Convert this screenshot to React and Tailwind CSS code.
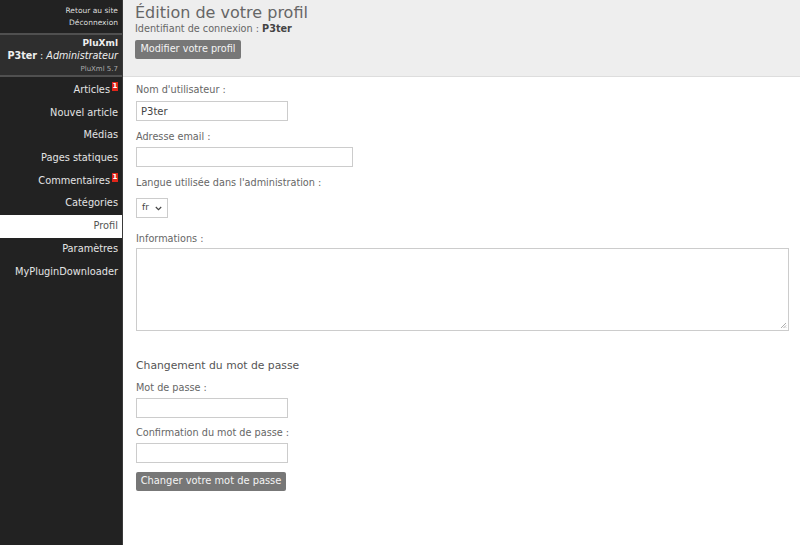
import React from "react";

const menu = [
  { label: "Articles", badge: true },
  { label: "Nouvel article" },
  { label: "Médias" },
  { label: "Pages statiques" },
  { label: "Commentaires", badge: true },
  { label: "Catégories" },
  { label: "Profil", active: true },
  { label: "Paramètres" },
  { label: "MyPluginDownloader" },
];

function Badge() {
  return (
    <span className="relative top-[-4px] ml-[2px] inline-flex h-[9px] w-[6px] items-center justify-center bg-[#e0261a] text-[7px] leading-none font-bold text-white">
      1
    </span>
  );
}

export default function App() {
  return (
    <div
      className="flex h-[545px] w-[800px] overflow-hidden bg-white text-[#555]"
      style={{ fontFamily: '"DejaVu Sans", sans-serif' }}
    >
      <aside className="flex w-[123px] shrink-0 flex-col border-r border-[#3a3a3a] bg-[#222]">
        <div className="flex h-[33px] flex-col items-end justify-center gap-[3px] pr-[4px] text-[7.5px] leading-[9px] text-[#ddd]">
          <span>Retour au site</span>
          <span>Déconnexion</span>
        </div>
        <div className="flex h-[44px] flex-col items-end justify-center border-y-2 border-[#505050] bg-[#2e2e2e] pr-[4px] text-right whitespace-nowrap">
          <span className="text-[9px] leading-[11px] font-bold text-[#eee]">PluXml</span>
          <span className="text-[9.6px] leading-[13px] text-[#eee]">
            <b>P3ter</b> : <i>Administrateur</i>
          </span>
          <span className="mt-[3px] text-[7px] leading-[8px] text-[#aaa]">PluXml 5.7</span>
        </div>
        <nav className="mt-[2px] flex flex-col">
          {menu.map((m) => (
            <div
              key={m.label}
              className={
                "flex h-[22.7px] items-center justify-end pr-[4px] text-[9.8px] " +
                (m.active ? "bg-white text-[#555]" : "text-[#e4e4e4]")
              }
            >
              {m.label}
              {m.badge && <Badge />}
            </div>
          ))}
        </nav>
      </aside>
      <main className="flex flex-1 flex-col">
        <header className="flex h-[77px] flex-col border-b border-[#ddd] bg-[#eee] pl-[12px] pt-[3px]">
          <h1 className="text-[16px] leading-[20px] text-[#666]">Édition de votre profil</h1>
          <p className="text-[9.7px] leading-[12px] text-[#666]">
            Identifiant de connexion : <b className="text-[#444]">P3ter</b>
          </p>
          <button className="mt-[5px] h-[19px] w-[106px] rounded-[2px] bg-[#777] text-[9.7px] whitespace-nowrap text-[#f4f4f4]">
            Modifier votre profil
          </button>
        </header>
        <div className="flex flex-col pl-[13px] pt-[7px] text-[9.7px] text-[#666]">
          <label className="leading-[12px]">Nom d'utilisateur :</label>
          <div className="mt-[5px] flex h-[20px] w-[152px] items-center border border-[#ccc] px-[4px] text-[10px] text-[#444]">
            P3ter
          </div>
          <label className="mt-[10px] leading-[12px]">Adresse email :</label>
          <div className="mt-[4px] h-[20px] w-[217px] border border-[#ccc]" />
          <label className="mt-[10px] leading-[12px]">Langue utilisée dans l'administration :</label>
          <div className="mt-[9px] flex h-[20px] w-[32px] items-center justify-between border border-[#ccc] px-[5px] text-[9px] text-[#444]">
            <span>fr</span>
            <svg width="7" height="5" viewBox="0 0 7 5">
              <path d="M0.8 1 L3.5 3.6 L6.2 1" fill="none" stroke="#444" strokeWidth="1.2" />
            </svg>
          </div>
          <label className="mt-[15px] leading-[12px]">Informations :</label>
          <div className="relative mt-[3px] h-[83px] w-[653px] border border-[#ccc]">
            <svg className="absolute right-[1px] bottom-[1px]" width="7" height="7" viewBox="0 0 7 7">
              <path d="M6 1 L1 6 M6 3.5 L3.5 6 M6 5.5 L5.5 6" stroke="#999" strokeWidth="0.8" />
            </svg>
          </div>
          <h2 className="mt-[28px] text-[10.8px] leading-[14px] text-[#555]">Changement du mot de passe</h2>
          <label className="mt-[9px] leading-[12px]">Mot de passe :</label>
          <div className="mt-[4px] h-[20px] w-[152px] border border-[#ccc]" />
          <label className="mt-[9px] leading-[12px]">Confirmation du mot de passe :</label>
          <div className="mt-[4px] h-[20px] w-[152px] border border-[#ccc]" />
          <button className="mt-[9px] h-[19px] w-[150px] rounded-[2px] bg-[#777] text-[9.9px] whitespace-nowrap text-[#f4f4f4]">
            Changer votre mot de passe
          </button>
        </div>
      </main>
    </div>
  );
}
